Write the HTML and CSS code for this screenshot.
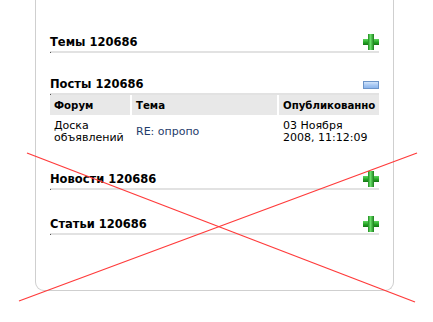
FILE: index.html
```html
<!DOCTYPE html>
<html lang="ru">
<head>
    <meta charset="UTF-8">
    <title>Профиль</title>
    <link rel="stylesheet" href="styles.css">
</head>
<body>
    <div class="panel">
        <div class="section">
            <div class="section-head">
                <h3>Темы 120686</h3>
                <span class="icon-plus"></span>
            </div>
        </div>

        <div class="section">
            <div class="section-head">
                <h3>Посты 120686</h3>
                <span class="icon-minus"></span>
            </div>
            <table class="posts">
                <tr>
                    <th class="col-forum">Форум</th>
                    <th class="col-topic">Тема</th>
                    <th class="col-date">Опубликованно</th>
                </tr>
                <tr>
                    <td>Доска объявлений</td>
                    <td><a href="#">RE: опропо</a></td>
                    <td>03 Ноября 2008, 11:12:09</td>
                </tr>
            </table>
        </div>

        <div class="section">
            <div class="section-head">
                <h3>Новости 120686</h3>
                <span class="icon-plus"></span>
            </div>
        </div>

        <div class="section section-last">
            <div class="section-head">
                <h3>Статьи 120686</h3>
                <span class="icon-plus"></span>
            </div>
        </div>
    </div>

    <!-- перечёркнуто -->
    <svg class="cross-out" width="433" height="322" viewBox="0 0 433 322">
        <line x1="27" y1="153" x2="415" y2="302" />
        <line x1="417" y1="153" x2="19" y2="301" />
    </svg>
</body>
</html>
```

FILE: styles.css
```css
body {
    margin: 0;
    background: #fff;
    font-family: "DejaVu Sans", Verdana, sans-serif;
    font-size: 11px;
    color: #000;
}
.panel {
    width: 329px;
    height: 290px;
    margin-left: 35px;
    padding: 0 14px;
    border: 1px solid #cfcfcf;
    border-top: none;
    border-radius: 0 0 9px 9px;
}
.section {
    padding-top: 21px;
}
.section:first-child {
    padding-top: 32px;
}
.section-last {
    padding-top: 24px;
}
.section-head {
    display: flex;
    justify-content: space-between;
    align-items: flex-end;
    height: 18px;
    padding-bottom: 1px;
    border-bottom: 2px solid #e2e2e2;
    position: relative;
}
.section-head::before {
    content: "";
    position: absolute;
    left: 0;
    bottom: -2px;
    width: 1px;
    height: 1px;
    background: #555;
}
.section-head h3 {
    margin: 0 0 1px;
    font-size: 11.5px;
    font-weight: bold;
    line-height: 13px;
}
.icon-plus {
    width: 16px;
    height: 16px;
    background:
        linear-gradient(to right, #1f8a1f, #6be06b 40%, #1a7e1a) 5px 0 / 6px 16px no-repeat,
        linear-gradient(to bottom, #5cd65c, #22a022 60%, #167516) 0 5px / 16px 6px no-repeat;
    margin-bottom: 0;
}
.icon-minus {
    width: 16px;
    height: 8px;
    box-sizing: border-box;
    border: 1px solid #6d95c9;
    background: linear-gradient(to bottom, #d3e5fb, #a9c9f3 50%, #8db6ec);
    margin-bottom: 3px;
}
.posts {
    table-layout: fixed;
    width: 333px;
    margin: 0 0 0 -2px;
    border-spacing: 2px 0;
    font-size: 11px;
}
.posts th {
    box-sizing: border-box;
    background: #e8e8e8;
    text-align: left;
    font-size: 10.2px;
    font-weight: bold;
    height: 20px;
    padding: 0 4px;
}
.posts td {
    padding: 5px 4px 4px;
    vertical-align: middle;
    line-height: 12px;
}
.col-forum {
    width: 80px;
}
.col-topic {
    width: 145px;
}
.col-date {
    width: 100px;
}
.posts a {
    color: #1f3c6b;
    text-decoration: none;
}
.cross-out {
    position: absolute;
    left: 0;
    top: 0;
    pointer-events: none;
}
.cross-out line {
    stroke: #ff3b3b;
    stroke-width: 1.3;
}
```
